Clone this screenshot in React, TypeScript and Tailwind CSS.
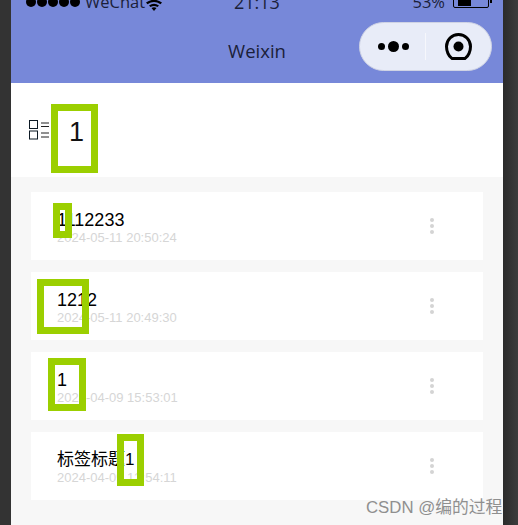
const items = [
  { title: "1112233", time: "2024-05-11 20:50:24", size: "text-[18px]" },
  { title: "1212", time: "2024-05-11 20:49:30", size: "text-[18px]" },
  { title: "1", time: "2024-04-09 15:53:01", size: "text-[18px]" },
  { title: "标签标题1", time: "2024-04-09 12:54:11", size: "text-[17px]" },
];

const marks = [
  "left-[51px] top-[104px] w-[47px] h-[69px]",
  "left-[53px] top-[203px] w-[19px] h-[35px]",
  "left-[37px] top-[279px] w-[52px] h-[55px]",
  "left-[48px] top-[358px] w-[38px] h-[53px]",
  "left-[117px] top-[434px] w-[27px] h-[52px]",
];

function ListIcon() {
  return (
    <svg width="21" height="20" viewBox="0 0 21 20" fill="none" className="shrink-0">
      <rect x="0.5" y="0.5" width="8" height="8" stroke="#0d1a24" />
      <rect x="0.5" y="11" width="8" height="8" stroke="#0d1a24" />
      <path d="M12 3h8M12 6.5h8M12 13h8M12 17h8" stroke="#222" />
    </svg>
  );
}

function Capsule() {
  return (
    <div className="flex items-center w-[133px] h-[49px] rounded-full bg-[#e8ecf8] border border-[#cfd3e4]">
      <div className="w-[65px] flex items-center justify-center gap-[3px] pl-[1px]">
        <span className="w-[7px] h-[7px] rounded-full bg-black" />
        <span className="w-[11px] h-[11px] rounded-full bg-black" />
        <span className="w-[7px] h-[7px] rounded-full bg-black" />
      </div>
      <div className="w-px h-[27px] bg-[#f6f7fc]" />
      <div className="flex-1 flex items-center justify-center">
        <svg width="27" height="27" viewBox="0 0 27 27" fill="none">
          <path
            d="M7 25.5H20C23.5 23.5 25.5 18 25.5 13.5A12 12 0 0 0 1.5 13.5C1.5 18 3.5 23.5 7 25.5Z"
            stroke="#000"
            strokeWidth="3"
          />
          <circle cx="13.5" cy="13.5" r="5" fill="#000" />
        </svg>
      </div>
    </div>
  );
}

function Kebab() {
  return (
    <div className="flex flex-col gap-[2px]">
      <span className="w-[4px] h-[4px] rounded-full bg-[#d4d4d4]" />
      <span className="w-[4px] h-[4px] rounded-full bg-[#d4d4d4]" />
      <span className="w-[4px] h-[4px] rounded-full bg-[#d4d4d4]" />
    </div>
  );
}

export default function App() {
  return (
    <div
      className="relative w-[518px] h-[525px] overflow-hidden flex bg-[#333333]"
      style={{ fontFamily: '"Liberation Sans", "Noto Sans CJK SC", sans-serif' }}
    >
      <div className="w-[11px] shrink-0 bg-[#333333]" />
      <div className="w-[492px] shrink-0 flex flex-col bg-[#f7f7f7]">
        <div className="h-[83px] shrink-0 bg-[#7788d9] overflow-hidden font-['Open_Sans']">
          <div className="h-[12px] -mt-[4px] pl-[15px] pr-[11px] flex items-center justify-between text-[#1b1f3a] text-[16.5px] leading-[16px]">
            <div className="flex items-center gap-[5px] w-[208px]">
              <div className="flex gap-[1px]">
                {[0, 1, 2, 3, 4].map((i) => (
                  <span key={i} className="w-[10px] h-[10px] rounded-full bg-black" />
                ))}
              </div>
              <span className="whitespace-nowrap">WeChat</span>
              <svg width="16" height="12" viewBox="0 0 16 12" className="-ml-[4px] shrink-0 mt-[5px]">
                <path d="M0 3.5Q8-2 16 3.5L14.5 5.2Q8 1 1.5 5.2ZM3 6.5Q8 3 13 6.5L11.5 8Q8 6 4.5 8ZM5.5 9Q8 7.6 10.5 9L8 12Z" fill="#000" />
              </svg>
            </div>
            <span className="text-[18px] mr-auto">21:13</span>
            <div className="flex items-center gap-[8px] justify-end">
              <span>53%</span>
              <div className="flex items-center">
                <div className="w-[36px] h-[15px] border border-black rounded-[2px] -mt-[4px] py-[1px] pl-[4px]">
                  <div className="w-[13px] h-full bg-black" />
                </div>
                <div className="w-[2px] h-[5px] bg-black ml-[1px] -mt-[4px]" />
              </div>
            </div>
          </div>
          <div className="relative flex items-center justify-center h-[49px] mt-[14px]">
            <span className="text-[18.5px] text-[#1b1f3a] mt-[9px]">Weixin</span>
            <div className="absolute right-[11px] top-0">
              <Capsule />
            </div>
          </div>
        </div>

        <div className="h-[94px] shrink-0 bg-white flex items-center pl-[18px] gap-[19px]">
          <ListIcon />
          <span className="text-[27px] leading-none text-[#111] mt-[5px]">1</span>
        </div>

        <div className="flex flex-col gap-[12px] px-[20px] pt-[15px]">
          {items.map((it) => (
            <div key={it.time} className="h-[68px] bg-white flex items-center justify-between pl-[26px] pr-[49px]">
              <div className="flex flex-col pt-[3px]">
                <span className={`${it.size} leading-[20px] text-black`}>{it.title}</span>
                <span className="text-[13px] leading-[16px] text-[#d6d6d6]">{it.time}</span>
              </div>
              <Kebab />
            </div>
          ))}
        </div>
      </div>
      <div className="flex-1 bg-gradient-to-r from-[#2b2b2b] to-[#3c3c3c]" />

      {marks.map((m) => (
        <div key={m} className={`absolute border-[7px] border-[#9bcf00] ${m}`} />
      ))}

      <span className="absolute left-[366px] top-[498px] text-[16.8px] leading-[20px] text-[#8f8f8f] whitespace-nowrap">
        CSDN @编的过程
      </span>
    </div>
  );
}
